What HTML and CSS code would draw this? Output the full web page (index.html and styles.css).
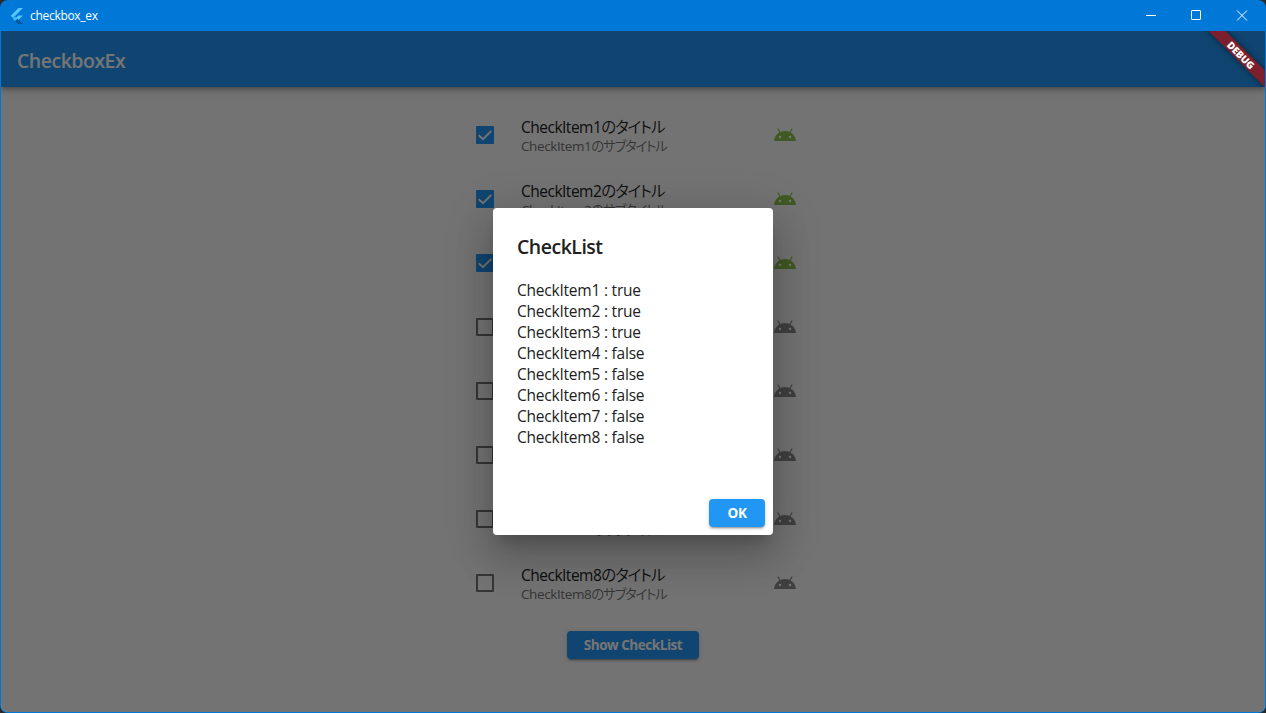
FILE: index.html
```
<!DOCTYPE html>
<html lang="ja">
<head>
<meta charset="utf-8">
<title>checkbox_ex</title>
<link rel="stylesheet" href="styles.css">
</head>
<body>
<svg class="defs" width="0" height="0">
  <symbol id="android" viewBox="0 0 24 24"><path d="M17.6 9.48l1.84-3.18c.16-.31.04-.69-.26-.85-.29-.15-.65-.06-.83.22l-1.88 3.24c-2.86-1.21-6.08-1.21-8.94 0L5.65 5.67c-.19-.29-.58-.38-.87-.2-.28.18-.37.54-.22.83L6.4 9.48C3.3 11.25 1.28 14.44 1 18h22c-.28-3.56-2.3-6.75-5.4-8.52zM7 15.25a1.25 1.25 0 1 1 0-2.5 1.25 1.25 0 0 1 0 2.5zm10 0a1.25 1.25 0 1 1 0-2.5 1.25 1.25 0 0 1 0 2.5z"/></symbol>
  <symbol id="check" viewBox="0 0 18 18"><path d="M2.7 9.2 7 13.2 15.3 4.9" fill="none" stroke="#fafafa" stroke-width="2"/></symbol>
</svg>
<div class="window">
  <header class="titlebar">
    <svg class="logo" width="14" height="16" viewBox="0 0 14 16"><path d="M8.4 0H13L3 10 .7 7.700z" fill="#54c5f8"/><path d="M8.400 7.400H13L7.300 13 5 10.700z" fill="#54c5f8"/><path d="M5 13 7.300 10.700 13 16H8.400z" fill="#01579b"/><path d="M2.800 10.700 5 8.500l2.300 2.200L5 13z" fill="#40b8f5"/></svg>
    <span class="caption">checkbox_ex</span>
    <svg class="controls" width="138" height="31" viewBox="0 0 138 31" fill="none" stroke="#fff"><path d="M18 15.500h10"/><rect x="63.500" y="10.500" width="9" height="9" rx=".5"/><path d="M109 10.500l10 10M119 10.500l-10 10"/></svg>
  </header>
  <div class="client">
    <div class="appbar"><h1>CheckboxEx</h1></div>
    <main class="list">
      <div class="row"><span class="box on"><svg><use href="#check"/></svg></span><div class="texts"><div class="title">CheckItem1<span class="ja">のタイトル</span></div><div class="sub">CheckItem1<span class="ja">のサブタイトル</span></div></div><svg class="droid green"><use href="#android"/></svg></div>
      <div class="row"><span class="box on"><svg><use href="#check"/></svg></span><div class="texts"><div class="title">CheckItem2<span class="ja">のタイトル</span></div><div class="sub">CheckItem2<span class="ja">のサブタイトル</span></div></div><svg class="droid green"><use href="#android"/></svg></div>
      <div class="row"><span class="box on"><svg><use href="#check"/></svg></span><div class="texts"></div><svg class="droid green"><use href="#android"/></svg></div>
      <div class="row"><span class="box"></span><div class="texts"></div><svg class="droid"><use href="#android"/></svg></div>
      <div class="row"><span class="box"></span><div class="texts"></div><svg class="droid"><use href="#android"/></svg></div>
      <div class="row"><span class="box"></span><div class="texts"></div><svg class="droid"><use href="#android"/></svg></div>
      <div class="row"><span class="box"></span><div class="texts"><div class="title">CheckItem7<span class="ja">のタイトル</span></div><div class="sub">CheckItem7<span class="ja">のサブタイトル</span></div></div><svg class="droid"><use href="#android"/></svg></div>
      <div class="row"><span class="box"></span><div class="texts"><div class="title">CheckItem8<span class="ja">のタイトル</span></div><div class="sub">CheckItem8<span class="ja">のサブタイトル</span></div></div><svg class="droid"><use href="#android"/></svg></div>
      <button class="btn show">Show CheckList</button>
    </main>
    <div class="scrim">
      <section class="dialog">
        <h2>CheckList</h2>
        <div class="lines">
          <div>CheckItem1 : true</div>
          <div>CheckItem2 : true</div>
          <div>CheckItem3 : true</div>
          <div>CheckItem4 : false</div>
          <div>CheckItem5 : false</div>
          <div>CheckItem6 : false</div>
          <div>CheckItem7 : false</div>
          <div>CheckItem8 : false</div>
        </div>
        <button class="btn ok">OK</button>
      </section>
    </div>
    <div class="banner"><div class="ribbon">DEBUG</div></div>
  </div>
</div>
</body>
</html>
```
FILE: styles.css
```
* { box-sizing: border-box; }
body { margin: 0; background: #2b2b2b; font-family: "Open Sans", "Noto Sans CJK JP", sans-serif; overflow: hidden; }
.defs { position: absolute; }
.window { width: 1266px; height: 713px; display: flex; flex-direction: column; background: #0078d7; border-radius: 8px; overflow: hidden; }
.titlebar { height: 31px; flex: none; display: flex; align-items: center; padding-left: 10px; color: #fff; }
.logo { margin-right: 6px; }
.caption { font-size: 12px; letter-spacing: -.3px; flex: 1; }
.client { position: relative; flex: 1; margin: 0 1px 1px; background: #fafafa; border-radius: 0 0 7px 7px; overflow: hidden; }
.appbar { position: relative; height: 56px; padding: 0 16px; display: flex; align-items: center; background: #2196f3; color: #fff; box-shadow: 0 2px 4px -1px rgba(0,0,0,.2), 0 4px 5px rgba(0,0,0,.14), 0 1px 10px rgba(0,0,0,.12); }
h1, h2 { margin: 0; font-size: 20px; font-weight: 600; line-height: 28px; }
h1 { padding-top: 4px; font-size: 19.5px; letter-spacing: -.5px; }
.list { width: 340px; margin: 16px auto 0; display: flex; flex-direction: column; align-items: center; }
.row { width: 100%; height: 64px; padding: 0 8px 0 11px; display: flex; align-items: center; transform: translateX(2px); }
.box { width: 18px; height: 18px; flex: none; border: 2px solid #757575; border-radius: 1px; }
.box.on { border: 0; background: #2196f3; }
.box svg { display: block; width: 18px; height: 18px; }
.texts { flex: 1; padding: 2px 0 0 27px; white-space: nowrap; }
.title { font-size: 15.5px; line-height: 20px; color: #212121; letter-spacing: -.5px; }
.sub { font-size: 13.5px; line-height: 19px; color: #757575; letter-spacing: -.4px; }
.ja { font-weight: 350; font-feature-settings: "palt"; letter-spacing: -1.1px; }
.sub .ja { letter-spacing: -1.3px; }
.droid { width: 24px; height: 24px; flex: none; fill: #8c8c8c; }
.droid.green { fill: #8bc34a; }
.btn { border: 0; padding: 1px 0 0; border-radius: 4px; background: #2196f3; color: #fff; font: 700 13.5px/27px "Open Sans", sans-serif; height: 28px; box-shadow: 0 3px 1px -2px rgba(0,0,0,.2), 0 2px 2px rgba(0,0,0,.14), 0 1px 5px rgba(0,0,0,.12); }
.show { width: 132px; margin-top: 16px; letter-spacing: -.45px; }
.scrim { position: absolute; inset: 0; background: rgba(0,0,0,.54); }
.dialog { position: absolute; left: 492px; top: 177px; width: 280px; height: 327px; padding: 25px 8px 8px 24px; display: flex; flex-direction: column; background: #fff; border-radius: 4px; box-shadow: 0 11px 15px -7px rgba(0,0,0,.2), 0 24px 38px 3px rgba(0,0,0,.14), 0 9px 46px 8px rgba(0,0,0,.12); }
h2 { color: #212121; font-size: 19.5px; letter-spacing: -.5px; }
.lines { flex: 1; margin-top: 19px; font-size: 15.5px; line-height: 21px; color: #212121; letter-spacing: -.22px; }
.ok { width: 56px; align-self: flex-end; letter-spacing: -.4px; }
.banner { position: absolute; right: 0; top: 0; width: 80px; height: 56px; overflow: hidden; }
.ribbon { position: absolute; width: 140px; height: 12px; left: -14px; top: 18px; transform: rotate(45deg); background: #7c1f2c; color: #fff; font: 800 10px/12px "Open Sans", sans-serif; text-align: center; letter-spacing: -.1px; box-shadow: 0 0 6px rgba(0,0,0,.5); }
```
